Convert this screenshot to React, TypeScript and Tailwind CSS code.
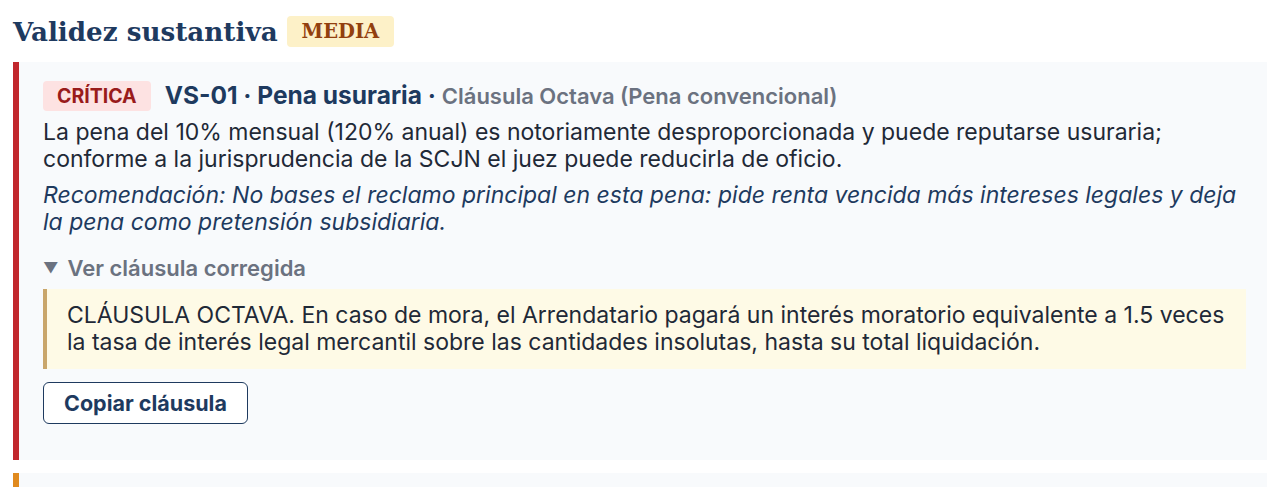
export default function App() {
  const sans = { fontFamily: "Inter, 'Noto Sans', sans-serif" };
  const serif = { fontFamily: "'DejaVu Serif', 'Liberation Serif', serif" };

  return (
    <div className="h-screen overflow-hidden bg-white px-[13px] pt-[14px]" style={sans}>
      <h2 className="flex items-center gap-[9px] text-[26.2px] font-bold leading-[35px] text-[#1e3a5f]" style={serif}>
        Validez sustantiva
        <span className="rounded-[4px] bg-[#fdf1c8] px-[15px] py-[3px] text-[19.5px] leading-[25px] text-[#92400e]">MEDIA</span>
      </h2>

      <div className="mt-[13px] border-l-[6px] border-[#c1272d] bg-[#f8fafc] pb-[36px] pl-[24px] pr-[21px] pt-[18px]">
        <div className="flex items-center gap-[14px]">
          <span className="rounded-[4px] bg-[#fde2e2] px-[14px] py-[3px] text-[19.5px] font-bold leading-[24px] text-[#991b1b]">
            CRÍTICA
          </span>
          <h3 className="text-[24.5px] font-bold leading-[30px] text-[#1e3a5f]">
            VS-01 · Pena usuraria ·{" "}
            <span className="text-[22px] font-semibold text-[#6b7280]">Cláusula Octava (Pena convencional)</span>
          </h3>
        </div>

        <p className="mt-[8px] text-[23px] leading-[27px] text-[#1f2937]">
          La pena del 10% mensual (120% anual) es notoriamente desproporcionada y puede reputarse usuraria; conforme a la
          jurisprudencia de la SCJN el juez puede reducirla de oficio.
        </p>
        <p className="mt-[9px] text-[23px] italic leading-[27px] text-[#1e3a5f]">
          Recomendación: No bases el reclamo principal en esta pena: pide renta vencida más intereses legales y deja la
          pena como pretensión subsidiaria.
        </p>

        <details open className="mt-[19px]">
          <summary className="flex cursor-pointer list-none items-center gap-[9px] text-[22px] font-semibold leading-[26px] text-[#6b7280] [&::-webkit-details-marker]:hidden">
            <span className="text-[15px]">▼</span>
            Ver cláusula corregida
          </summary>
          <div className="mt-[8px] border-l-[4px] border-[#c9a66b] bg-[#fefae6] py-[13px] pl-[20px] pr-[16px] text-[23px] leading-[27px] text-[#1f2937]">
            CLÁUSULA OCTAVA. En caso de mora, el Arrendatario pagará un interés moratorio equivalente a 1.5 veces la tasa de
            interés legal mercantil sobre las cantidades insolutas, hasta su total liquidación.
          </div>
          <button className="mt-[13px] rounded-[6px] border-[1.5px] border-[#1e3a5f] bg-white px-[20px] py-[6.5px] text-[21.5px] font-bold leading-[27px] text-[#1e3a5f]">
            Copiar cláusula
          </button>
        </details>
      </div>

      <div className="mt-[13px] h-[40px] border-l-[6px] border-[#e08a1e] bg-[#f8fafc]" />
    </div>
  );
}
